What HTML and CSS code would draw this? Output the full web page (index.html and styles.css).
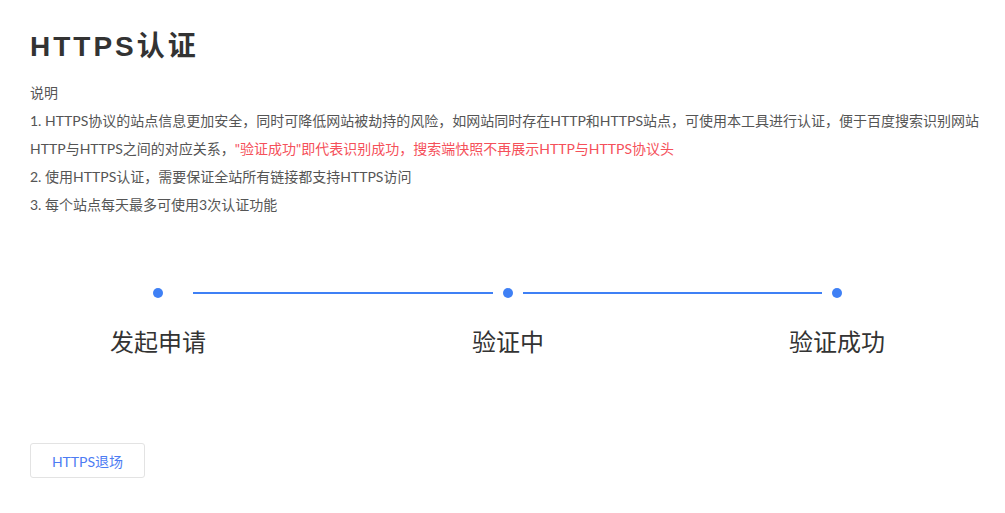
FILE: index.html
```html
<!DOCTYPE html>
<html lang="zh-CN">
<head>
    <meta charset="UTF-8">
    <title>HTTPS认证</title>
    <link rel="stylesheet" href="styles.css">
</head>
<body>
    <div class="page">
        <h1 class="title">HTTPS认证</h1>
        <div class="desc">
            <p>说明</p>
            <p>1. HTTPS协议的站点信息更加安全，同时可降低网站被劫持的风险，如网站同时存在HTTP和HTTPS站点，可使用本工具进行认证，便于百度搜索识别网站HTTP与HTTPS之间的对应关系，<span class="warn">"验证成功"即代表识别成功，搜索端快照不再展示HTTP与HTTPS协议头</span></p>
            <p>2. 使用HTTPS认证，需要保证全站所有链接都支持HTTPS访问</p>
            <p>3. 每个站点每天最多可使用3次认证功能</p>
        </div>

        <div class="steps">
            <span class="dot"></span>
            <span class="line first"></span>
            <span class="dot"></span>
            <span class="line"></span>
            <span class="dot"></span>
            <span class="label">发起申请</span>
            <span class="label col3">验证中</span>
            <span class="label col5">验证成功</span>
        </div>

        <button class="btn">HTTPS退场</button>
    </div>
</body>
</html>
```

FILE: styles.css
```css
body {
    margin: 0;
    background: #fff;
    font-family: "Lato", "Noto Sans CJK SC", sans-serif;
    color: #333;
}
.page {
    padding: 26px 20px 30px 30px;
}
.title {
    margin: 0;
    font-family: "Liberation Sans", "Noto Sans CJK SC", sans-serif;
    font-size: 28px;
    font-weight: bold;
    letter-spacing: 3px;
    line-height: 42px;
    color: #333;
}
.desc {
    margin-top: 11px;
    font-size: 14px;
    line-height: 28px;
    color: #555;
}
.desc p {
    margin: 0;
}
.warn {
    color: #f5505a;
}
.steps {
    display: grid;
    grid-template-columns: 10px 340px 10px 319px 10px;
    grid-template-rows: 10px auto;
    row-gap: 27px;
    margin: 69px 0 0 123px;
}
.dot {
    width: 10px;
    height: 10px;
    border-radius: 50%;
    background: #3f80f5;
}
.line {
    align-self: center;
    height: 2px;
    margin: 0 10px;
    background: #3f80f5;
}
.line.first {
    margin-left: 30px;
}
.label {
    grid-row: 2;
    grid-column: 1;
    justify-self: center;
    white-space: nowrap;
    font-family: "Noto Sans CJK SC", sans-serif;
    font-size: 24px;
    line-height: 32px;
    color: #333;
}
.label.col3 {
    grid-column: 3;
}
.label.col5 {
    grid-column: 5;
}
.btn {
    margin-top: 86px;
    width: 115px;
    height: 35px;
    background: #fff;
    border: 1px solid #e3e3e3;
    border-radius: 3px;
    font-family: "Lato", "Noto Sans CJK SC", sans-serif;
    font-size: 14px;
    color: #4d7cf3;
    cursor: pointer;
}
```
